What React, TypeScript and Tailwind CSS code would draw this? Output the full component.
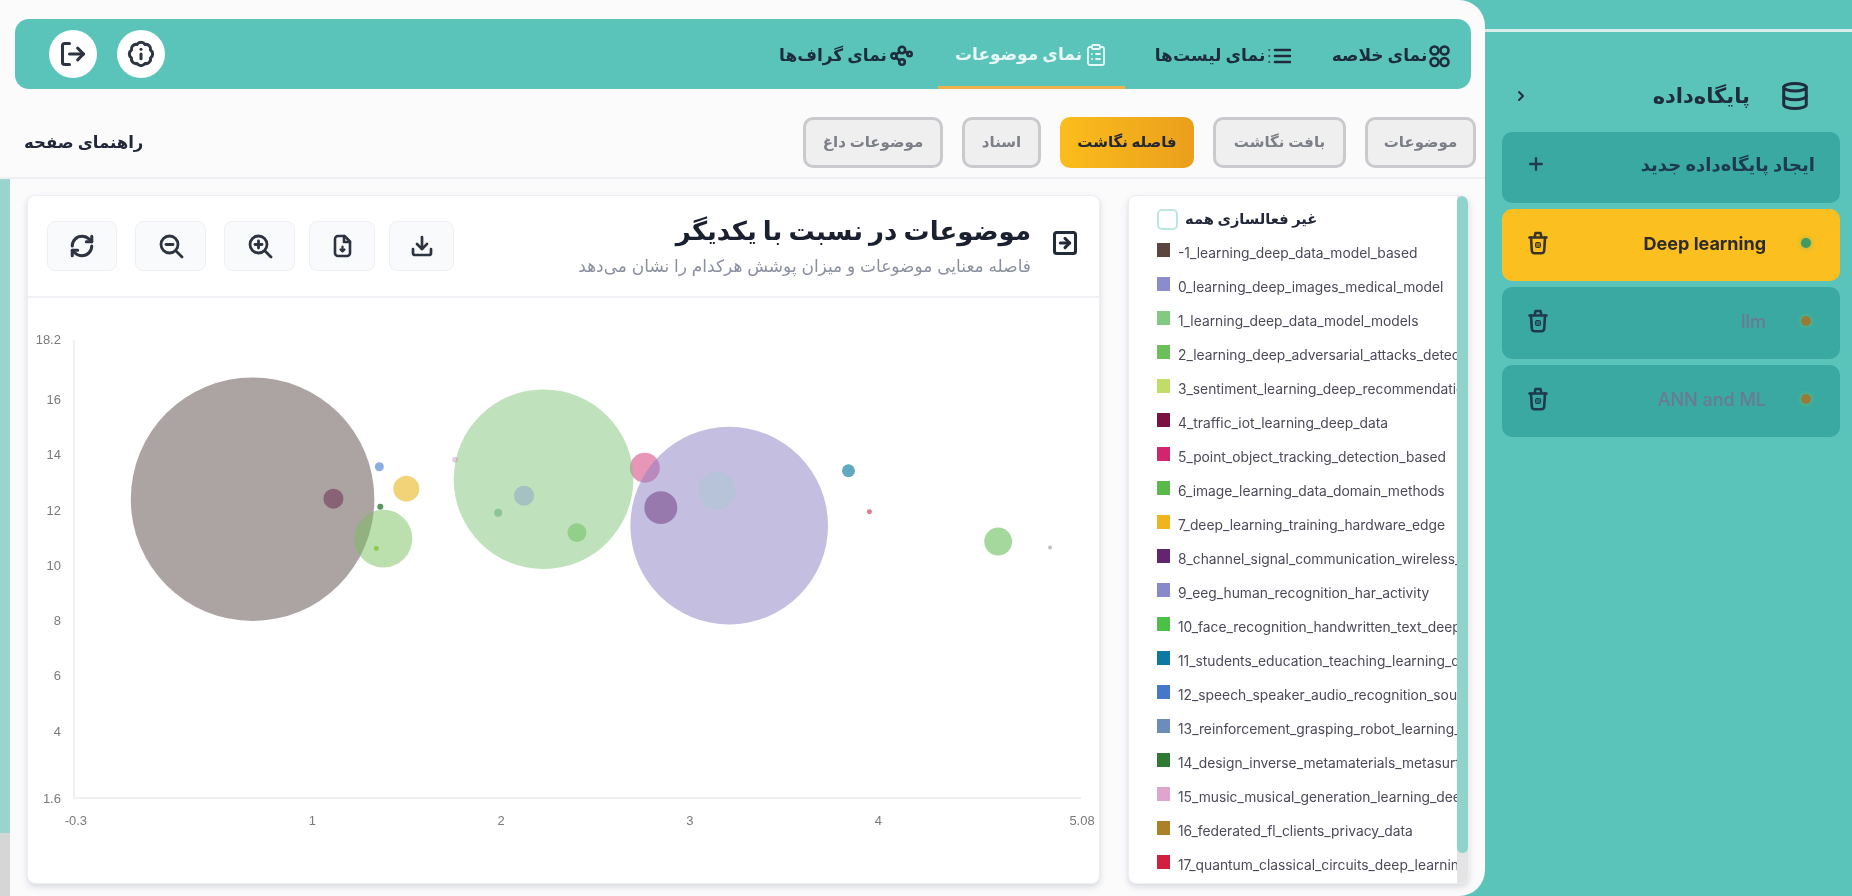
import React from "react";
import { LogOut, BadgeInfo, RefreshCw, Download, Database, Plus, ChevronRight, SquareArrowRight, ClipboardList } from "lucide-react";

const FONT = "font-['Inter','DejaVu_Sans',sans-serif]";

const SummaryIcon = () => (
  <svg width="21" height="25" viewBox="0 0 21 25" fill="none" stroke="currentColor" strokeWidth="2.6">
    <circle cx="5.5" cy="6.5" r="4" /><circle cx="15.5" cy="6.5" r="4" />
    <circle cx="5.5" cy="18" r="4" /><circle cx="15.5" cy="18" r="4" />
  </svg>
);
const ListIcon = () => (
  <svg width="24" height="20" viewBox="0 0 24 20" fill="none" stroke="currentColor" strokeWidth="2.6" strokeLinecap="round">
    <path d="M8 4h15M8 10h15M8 16h15" /><path d="M2 4h.5M2 10h.5M2 16h.5" strokeWidth="1.6" />
  </svg>
);
const GraphIcon = () => (
  <svg width="24" height="22" viewBox="0 0 24 22" fill="none" stroke="currentColor" strokeWidth="2.6" strokeLinecap="round">
    <circle cx="5" cy="11" r="2.6" /><circle cx="13" cy="5" r="3.2" /><circle cx="13" cy="17" r="2.8" /><circle cx="20.5" cy="9" r="2.2" />
    <path d="M7 9.5 10.5 7M7 12.5l3.5 3M15.8 6.6l2.8 1.4" />
  </svg>
);
const TrashIcon = () => (
  <svg width="20" height="24" viewBox="0 0 20 24" fill="none" stroke="currentColor" strokeWidth="2.6" strokeLinecap="round" strokeLinejoin="round">
    <path d="M1.5 6.5h17M6.5 6.5 7.5 2h5l1 4.5" />
    <path d="M3 6.5 3.8 19.5a3 3 0 0 0 3 2.8h6.4a3 3 0 0 0 3-2.8L17 6.5" />
    <rect x="7.5" y="11.5" width="5" height="5" rx="1" fill="currentColor" fillOpacity="0.55" strokeWidth="1" />
  </svg>
);
const FileIcon = () => (
  <svg width="22" height="24" viewBox="0 0 22 24" fill="none" stroke="currentColor" strokeWidth="2.6" strokeLinecap="round" strokeLinejoin="round">
    <path d="M7 2h6.5L19 7.5V19a3 3 0 0 1-3 3H7a3 3 0 0 1-3-3V5a3 3 0 0 1 3-3Z" />
    <path d="M13 2v6h6" />
    <path d="M11.5 12.5v5M9.5 15.5l2 2 2-2" strokeWidth="2.2" />
  </svg>
);
const MagnifierIcon = ({ plus }: { plus?: boolean }) => (
  <svg width="26" height="26" viewBox="0 0 26 26" fill="none" stroke="currentColor" strokeWidth="2.8" strokeLinecap="round">
    <circle cx="11.5" cy="11.5" r="8.5" />
    <path d="m18 18 6 6" />
    <path d="M8 11.5h7" />
    {plus && <path d="M11.5 8v7" />}
  </svg>
);

const navTabs = [
  { label: "نمای خلاصه", icon: <SummaryIcon />, cls: "w-[160px] pt-[4px]" },
  { label: "نمای لیست‌ها", icon: <ListIcon />, cls: "w-[176px] pt-[4px]" },
  { label: "نمای موضوعات", icon: <ClipboardList size={24} strokeWidth={1.8} />, cls: "w-[187px] mr-[10px] pt-[4px] text-[#e8f7f5] border-b-[3px] border-[#f0b04a]" },
  { label: "نمای گراف‌ها", icon: <GraphIcon />, cls: "w-[168px] mr-[8px] pt-[4px]" },
];

const subTabs = [
  { label: "موضوعات", cls: "w-[111px]" },
  { label: "بافت نگاشت", cls: "w-[133px]" },
  { label: "فاصله نگاشت", cls: "w-[134px]", active: true },
  { label: "اسناد", cls: "w-[79px]" },
  { label: "موضوعات داغ", cls: "w-[140px]" },
];

const legend: [string, string][] = [
  ["#5b463f", "-1_learning_deep_data_model_based"],
  ["#8b8ccb", "0_learning_deep_images_medical_model"],
  ["#82c982", "1_learning_deep_data_model_models"],
  ["#6cc05c", "2_learning_deep_adversarial_attacks_detection"],
  ["#c2dc6a", "3_sentiment_learning_deep_recommendation"],
  ["#7a1344", "4_traffic_iot_learning_deep_data"],
  ["#d1256f", "5_point_object_tracking_detection_based"],
  ["#5bb84a", "6_image_learning_data_domain_methods"],
  ["#eeb51f", "7_deep_learning_training_hardware_edge"],
  ["#64256f", "8_channel_signal_communication_wireless_deep"],
  ["#8789c8", "9_eeg_human_recognition_har_activity"],
  ["#4dc04a", "10_face_recognition_handwritten_text_deep"],
  ["#0c7aa0", "11_students_education_teaching_learning_deep"],
  ["#4678c8", "12_speech_speaker_audio_recognition_sound"],
  ["#6c8cbc", "13_reinforcement_grasping_robot_learning_deep"],
  ["#2f7a35", "14_design_inverse_metamaterials_metasurface"],
  ["#dfa5cc", "15_music_musical_generation_learning_deep"],
  ["#ab8128", "16_federated_fl_clients_privacy_data"],
  ["#d01f3f", "17_quantum_classical_circuits_deep_learning"],
];

const bubbles: [number, number, number, string, number][] = [
  [645, 468, 15, "#d12d71", 0.5],
  [252, 499.5, 122, "#5a4747", 0.5],
  [333, 499, 10, "#6b2f52", 0.55],
  [379, 467, 4.5, "#4a86d0", 0.65],
  [406, 489, 13, "#eab71e", 0.6],
  [380, 507, 3, "#2f7a35", 0.8],
  [383, 539, 29, "#79bf5d", 0.5],
  [376, 549, 2.5, "#8cc63f", 0.9],
  [455, 460, 3, "#dfa5cc", 0.6],
  [543.5, 479.5, 90, "#7fc57a", 0.5],
  [524, 496, 10, "#8c9fc8", 0.5],
  [498, 513, 4, "#4f9f70", 0.45],
  [577, 533, 9.5, "#5bb84a", 0.45],
  [729.5, 526, 99, "#8a7dc1", 0.5],
  [661, 508, 16.5, "#64256f", 0.45],
  [717, 491, 19, "#a8c8d0", 0.5],
  [849, 471, 6.5, "#0c7aa0", 0.65],
  [870, 512, 2.5, "#d01f3f", 0.6],
  [999, 542, 14, "#5bb84a", 0.55],
  [1051, 548, 2, "#8a7da0", 0.5],
];

const yTicks: [string, number][] = [["18.2", 339], ["16", 399], ["14", 454], ["12", 510], ["10", 565], ["8", 621], ["6", 676], ["4", 732], ["1.6", 799]];
const xTicks: [string, number][] = [["-0.3", 75], ["1", 312], ["2", 501], ["3", 690], ["4", 879], ["5.08", 1083]];

const tools = [
  { w: "w-[70px]", node: <RefreshCw size={26} strokeWidth={2.8} /> },
  { w: "w-[71px]", node: <MagnifierIcon /> },
  { w: "w-[71px]", node: <MagnifierIcon plus /> },
  { w: "w-[66px]", node: <FileIcon /> },
  { w: "w-[65px]", node: <Download size={24} strokeWidth={2.7} /> },
];

const dbs = [
  { name: "Deep learning", active: true },
  { name: "llm" },
  { name: "ANN and ML" },
];

export default function App() {
  return (
    <div className={`flex h-screen w-full overflow-hidden bg-[#5bc4ba] blur-[0.4px] ${FONT}`}>
      {/* main panel */}
      <div className="flex h-full w-[1485px] shrink-0 flex-col rounded-r-[26px] bg-[#fbfbfc] pt-[19px]">
        <nav dir="rtl" className="ml-[15px] mr-[14px] flex h-[70px] shrink-0 items-center justify-between rounded-[14px] bg-[#5bc4ba] pl-[34px] text-[#1e2d3d]">
          <div className="flex h-full items-stretch">
            {navTabs.map((t) => (
              <div key={t.label} className={`flex items-center justify-center gap-[2px] text-[17px] font-bold ${t.cls}`}>
                {t.icon}
                <span className="whitespace-nowrap">{t.label}</span>
              </div>
            ))}
          </div>
          <div dir="ltr" className="flex gap-[20px]">
            <div className="flex h-[48px] w-[48px] items-center justify-center rounded-full bg-white text-[#2d3340]"><LogOut size={28} strokeWidth={2.6} /></div>
            <div className="flex h-[48px] w-[48px] items-center justify-center rounded-full bg-white text-[#2d3340]"><BadgeInfo size={28} strokeWidth={2.6} /></div>
          </div>
        </nav>

        <div dir="rtl" className="flex h-[90px] shrink-0 items-center justify-between border-b-2 border-[#eef0f4] pl-[24px] pr-[9px] pt-[19px]">
          <div className="flex gap-[19px]">
            {subTabs.map((t) => (
              <div
                key={t.label}
                className={`flex h-[51px] items-center justify-center whitespace-nowrap rounded-[10px] text-[15px] ${t.cls} ${
                  t.active
                    ? "bg-gradient-to-l from-[#eb9f1c] to-[#fbbd1c] font-bold text-[#232833]"
                    : "border-[3px] border-[#c9cacd] bg-[#efefef] font-semibold text-[#7c7f88]"
                }`}
              >
                {t.label}
              </div>
            ))}
          </div>
          <div className="whitespace-nowrap text-[16.5px] font-bold text-[#22283a]">راهنمای صفحه</div>
        </div>

        <div className="flex min-h-0 flex-1">
          <div className="h-full w-[10px] shrink-0 bg-[#d6d6d6]">
            <div className="h-[654px] w-full bg-[#9ad4ce]" />
          </div>

          <div className="flex min-w-0 flex-1 gap-[28px] pl-[17px] pr-[16px] pt-[16px] pb-[12px]">
            {/* chart card */}
            <div className="flex w-[1073px] shrink-0 flex-col rounded-[8px] border border-[#eceef2] bg-white shadow-[0_3px_6px_rgba(90,100,120,0.22)]">
              <div className="flex h-[102px] shrink-0 items-center justify-between border-b-2 border-[#f0f1f4] pl-[19px] pr-[20px]">
                <div className="flex items-center">
                  {tools.map((t, i) => (
                    <div key={i} className={`flex h-[50px] items-center justify-center rounded-[8px] border border-[#eff0f3] bg-[#f9fafb] text-[#2d3340] ${t.w} ${i === 0 ? "" : i < 3 ? "ml-[18px]" : "ml-[14px]"}`}>
                      {t.node}
                    </div>
                  ))}
                </div>
                <div dir="rtl" className="flex items-center gap-[20px]">
                  <SquareArrowRight size={28} strokeWidth={2.6} className="-mt-[6px] text-[#232a3a]" />
                  <div className="-mt-[2px] flex flex-col gap-[7px]">
                    <div className="whitespace-nowrap text-[26px] font-bold leading-[34px] text-[#1b2030]">موضوعات در نسبت با یکدیگر</div>
                    <div className="whitespace-nowrap text-[17px] leading-[22px] text-[#8b90a0]">فاصله معنایی موضوعات و میزان پوشش هرکدام را نشان می‌دهد</div>
                  </div>
                </div>
              </div>
              <svg viewBox="27 298 1073 586" className="min-h-0 w-full flex-1">
                <path d="M73 340V799H1082" fill="none" stroke="#eef0f2" strokeWidth="2" />
                {yTicks.map(([l, y]) => (
                  <text key={l} x="60" y={y + 5} textAnchor="end" fontSize="13" fill="#7a7a7a" fontFamily="Liberation Sans">{l}</text>
                ))}
                {xTicks.map(([l, x]) => (
                  <text key={l} x={x} y="826" textAnchor="middle" fontSize="13" fill="#7a7a7a" fontFamily="Liberation Sans">{l}</text>
                ))}
                {bubbles.map(([cx, cy, r, c, o], i) => (
                  <circle key={i} cx={cx} cy={cy} r={r} fill={c} fillOpacity={o} />
                ))}
              </svg>
            </div>

            {/* legend card */}
            <div className="relative min-w-0 flex-1 overflow-hidden rounded-[8px] border border-[#eceef2] bg-white pl-[28px] pr-[11px] pt-[13px] shadow-[0_3px_6px_rgba(90,100,120,0.22)]">
              <div dir="rtl" className="mb-[13px] flex h-[21px] items-center justify-end gap-[7px]">
                <span className="whitespace-nowrap text-[14.7px] font-bold text-[#22283a]">غیر فعالسازی همه</span>
                <span className="h-[21px] w-[21px] rounded-[5px] border-2 border-[#bde6e1] bg-white" />
              </div>
              <div className="flex flex-col">
                {legend.map(([c, n]) => (
                  <div key={n} className="flex h-[34px] shrink-0 items-start gap-[8px] overflow-hidden">
                    <span className="h-[14px] w-[13px] shrink-0" style={{ backgroundColor: c }} />
                    <span className="mt-[1px] whitespace-nowrap text-[13.8px] leading-[18px] text-[#4c4a58]">{n}</span>
                  </div>
                ))}
              </div>
              <div className="absolute right-0 top-0 h-full w-[11px] bg-[#e4e4e4]">
                <div className="h-[657px] w-full rounded-full bg-[#8fd3cb]" />
              </div>
            </div>
          </div>
        </div>
      </div>

      {/* sidebar */}
      <aside className="flex min-w-0 flex-1 flex-col pl-[17px] pr-[12px] pt-[29px]">
        <div className="-ml-[17px] -mr-[12px] h-[3px] shrink-0 bg-[#d5eeeb]" />
        <div className="flex h-[100px] shrink-0 items-center justify-between pl-[11px] pr-[30px] pt-[27px] text-[#1e2d3d]">
          <ChevronRight size={16} strokeWidth={3} />
          <div dir="rtl" className="flex items-center gap-[30px]">
            <Database size={30} strokeWidth={2.4} />
            <span className="whitespace-nowrap text-[21px] font-bold">پایگاه‌داده</span>
          </div>
        </div>
        <div className="flex flex-col gap-[6px]">
          <div className="flex h-[71px] items-center justify-between rounded-[10px] bg-[#39a9a2] pb-[6px] pl-[24px] pr-[25px] text-[#1e3a4c]">
            <Plus size={20} strokeWidth={2.8} className="-mt-[2px]" />
            <span dir="rtl" className="whitespace-nowrap text-[18px] font-bold">ایجاد پایگاه‌داده جدید</span>
          </div>
          {dbs.map((d) => (
            <div key={d.name} className={`flex h-[72px] items-center justify-between rounded-[10px] pb-[4px] pl-[26px] pr-[29px] ${d.active ? "bg-[#fbbf1f] text-[#3a3427]" : "bg-[#39a9a2] text-[#1e3a4c]"}`}>
              <TrashIcon />
              <div className="flex items-center gap-[35px]">
                <span className={`whitespace-nowrap text-[18px] ${d.active ? "font-bold text-[#2d2a2a]" : "font-medium text-[#6b7a92]"}`}>{d.name}</span>
                <span className={`h-[10px] w-[10px] rounded-full ${d.active ? "bg-[#3f9a63] shadow-[0_0_5px_#8ab85a]" : "bg-[#9a7a38] shadow-[0_0_5px_#6fbf6a]"}`} />
              </div>
            </div>
          ))}
        </div>
      </aside>
    </div>
  );
}
